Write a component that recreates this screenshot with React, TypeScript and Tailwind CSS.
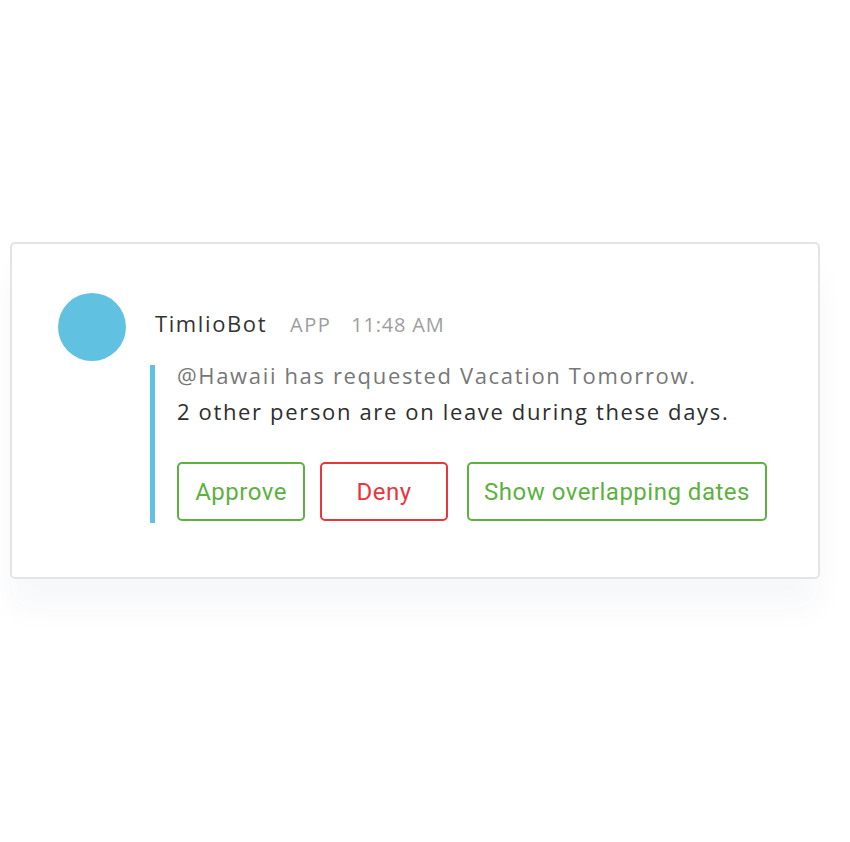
import React from "react";

function ActionButton({ label, tone }: { label: string; tone: "green" | "red" }) {
  const color =
    tone === "green"
      ? "border-[#5cb13f] text-[#5cb13f]"
      : "border-[#e8363b] text-[#e8363b]";
  return (
    <button
      className={`h-[59px] min-w-[128px] rounded-[5px] border-2 bg-white px-[15px] text-[24px] font-['Roboto',sans-serif] tracking-[0.5px] ${color}`}
    >
      {label}
    </button>
  );
}

export default function App() {
  return (
    <div className="min-h-[842px] w-[850px] bg-white pt-[242px] pl-[10px] font-['Open_Sans',sans-serif]">
      <div className="w-[810px] h-[337px] rounded-[5px] border-2 border-[#e4e4e4] bg-white shadow-[0_30px_30px_rgba(30,50,100,0.035)]">
        <div className="flex pt-[49px] pl-[46px]">
          <div className="h-[68px] w-[68px] shrink-0 rounded-full bg-[#61c1e1]" />
          <div className="ml-[24px] flex-1">
            <div className="ml-[5px] mt-[15px] flex items-baseline leading-[30px]">
              <span className="text-[22px] tracking-[1.6px] text-[#333333]">TimlioBot</span>
              <span className="ml-[23px] text-[20px] tracking-[1.5px] text-[#9e9e9e]">APP</span>
              <span className="ml-[20px] text-[20px] tracking-[0.8px] text-[#9e9e9e]">11:48 AM</span>
            </div>
            <div className="mt-[26px] border-l-[5px] border-[#61c1e1] pl-[22px] pb-[2px]">
              <p className="-mt-[1px] text-[22px] leading-[20px] tracking-[1.65px] text-[#777777]">
                @Hawaii has requested Vacation Tomorrow.
              </p>
              <p className="mt-[9px] text-[22px] leading-[35px] tracking-[1.65px] text-[#2e2e2e]">
                2 other person are on leave during these days.
              </p>
              <div className="mt-[33px] flex items-center">
                <ActionButton label="Approve" tone="green" />
                <div className="w-[15px]" />
                <ActionButton label="Deny" tone="red" />
                <div className="w-[19px]" />
                <ActionButton label="Show overlapping dates" tone="green" />
              </div>
            </div>
          </div>
        </div>
      </div>
    </div>
  );
}
